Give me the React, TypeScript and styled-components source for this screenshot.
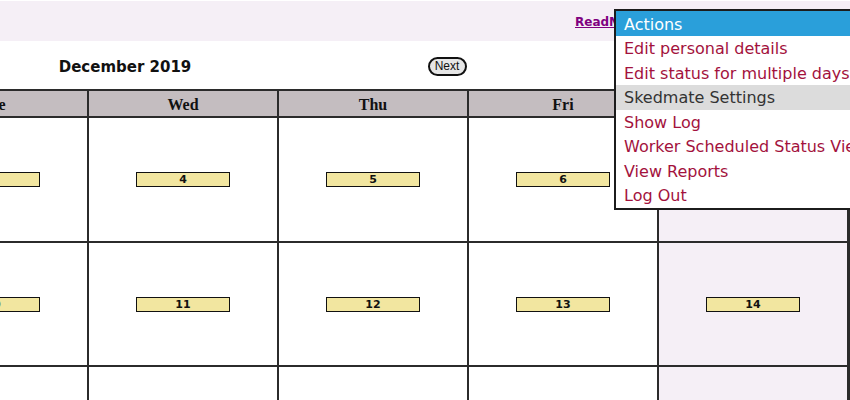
import React from "react";
import styled, { createGlobalStyle } from "styled-components";

const GlobalStyle = createGlobalStyle`
  html, body {
    margin: 0;
    padding: 0;
    background: #ffffff;
    overflow: hidden;
  }
  body {
    font-family: "DejaVu Sans", Verdana, sans-serif;
  }
`;

const Page = styled.div`
  position: relative;
  width: 850px;
  height: 400px;
  overflow: hidden;
`;

const TopBar = styled.div`
  margin-top: 1px;
  height: 40px;
  background: #f5eff6;
  display: flex;
  align-items: center;
  padding-left: 575px;
  padding-top: 1px;
  box-sizing: border-box;
`;

const TopLink = styled.a`
  color: #800080;
  font-family: "DejaVu Sans", Verdana, sans-serif;
  font-weight: bold;
  font-size: 12px;
  text-decoration: underline;
  cursor: pointer;
`;

const NavRow = styled.div`
  display: grid;
  grid-template-columns: 250px 394px;
  height: 48px;
  align-items: center;
`;

const MonthTitle = styled.div`
  padding-top: 4px;
  text-align: center;
  font-family: "DejaVu Sans", Verdana, sans-serif;
  font-weight: bold;
  font-size: 15px;
  color: #111;
`;

const NavCell = styled.div`
  display: flex;
  justify-content: center;
  padding-top: 2px;
`;

const NextButton = styled.button`
  height: 19px;
  width: 39px;
  padding: 0;
  border: 2px solid #111;
  border-radius: 10px;
  background: #e6e6e6;
  font-family: "Liberation Sans", Arial, sans-serif;
  font-size: 12px;
  color: #111;
  line-height: 14px;
`;

const Calendar = styled.div`
  margin-left: -103px;
  width: 952px;
  display: grid;
  grid-template-columns: repeat(5, 188px);
  grid-template-rows: 25px 123px 122px 123px;
  gap: 2px;
  padding: 2px;
  background: #2b2b2b;
`;

const HeaderCell = styled.div`
  background: #c4bdc0;
  display: flex;
  align-items: center;
  justify-content: center;
  padding-top: 2px;
  box-sizing: border-box;
  font-family: "Liberation Serif", "Times New Roman", serif;
  font-weight: bold;
  font-size: 16px;
  color: #111;
`;

const DayCell = styled.div<{ $weekend?: boolean }>`
  background: ${(p) => (p.$weekend ? "#f5eff6" : "#ffffff")};
  display: flex;
  align-items: center;
  justify-content: center;
`;

const DateLabel = styled.div`
  box-sizing: border-box;
  width: 94px;
  height: 15px;
  border: 1px solid #111;
  background: #f2e6a0;
  font-family: "DejaVu Sans", Verdana, sans-serif;
  font-weight: bold;
  font-size: 11px;
  line-height: 13px;
  text-align: center;
  color: #111;
`;

const Menu = styled.div`
  position: absolute;
  left: 614px;
  top: 9px;
  width: 260px;
  border: 2px solid #1c1c1c;
  background: #ffffff;
  font-family: "DejaVu Sans", sans-serif;
  font-size: 16px;
`;

const MenuHeader = styled.div`
  box-sizing: border-box;
  height: 25px;
  padding: 3px 0 0 8px;
  line-height: 22px;
  background: #2a9fda;
  color: #ffffff;
  white-space: nowrap;
`;

const MenuItem = styled.div<{ $active?: boolean }>`
  box-sizing: border-box;
  height: 24.5px;
  padding: 2px 0 0 8px;
  line-height: 22.5px;
  white-space: nowrap;
  color: ${(p) => (p.$active ? "#333333" : "#a3123d")};
  background: ${(p) => (p.$active ? "#dcdcdc" : "transparent")};
`;

const days = ["Tue", "Wed", "Thu", "Fri", "Sat"];
const weeks = [
  [3, 4, 5, 6, 7],
  [10, 11, 12, 13, 14],
  [17, 18, 19, 20, 21],
];

const menuItems = [
  "Edit personal details",
  "Edit status for multiple days",
  "Skedmate Settings",
  "Show Log",
  "Worker Scheduled Status View",
  "View Reports",
  "Log Out",
];

export default function App() {
  return (
    <>
      <GlobalStyle />
      <Page>
        <TopBar>
          <TopLink>ReadMe</TopLink>
        </TopBar>
        <NavRow>
          <MonthTitle>December 2019</MonthTitle>
          <NavCell>
            <NextButton>Next</NextButton>
          </NavCell>
        </NavRow>
        <Calendar>
          {days.map((d) => (
            <HeaderCell key={d}>{d}</HeaderCell>
          ))}
          {weeks.map((week, wi) =>
            week.map((n, i) => (
              <DayCell key={`${wi}-${n}`} $weekend={i === 4}>
                {wi < 2 && <DateLabel>{n}</DateLabel>}
              </DayCell>
            ))
          )}
        </Calendar>
        <Menu>
          <MenuHeader>Actions</MenuHeader>
          {menuItems.map((m) => (
            <MenuItem key={m} $active={m === "Skedmate Settings"}>
              {m}
            </MenuItem>
          ))}
        </Menu>
      </Page>
    </>
  );
}
